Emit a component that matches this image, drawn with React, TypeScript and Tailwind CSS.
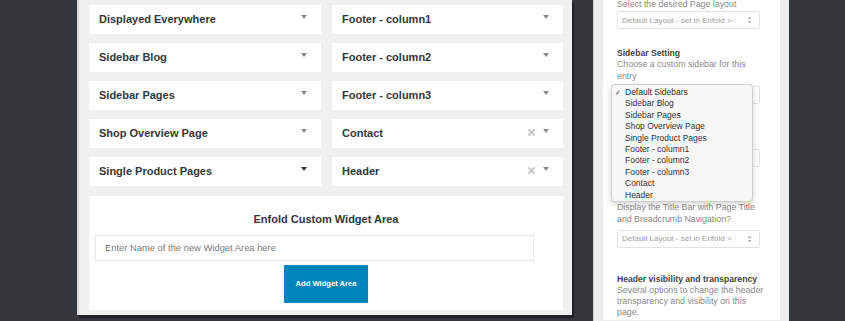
import React from 'react';

const font = { fontFamily: '"Liberation Sans", Arial, sans-serif' };

const Caret: React.FC<{ dark?: boolean }> = ({ dark }) => (
  <svg width="6" height="4" viewBox="0 0 6 4" className="-mt-[5px]">
    <path d="M0 0 L6 0 L3 4 Z" fill={dark ? '#333' : '#8a8a8a'} />
  </svg>
);

const Cross: React.FC = () => (
  <svg width="7" height="7" viewBox="0 0 7 7" className="-mt-[3px]">
    <path d="M1 1 L6 6 M6 1 L1 6" stroke="#c4c4c4" strokeWidth="1.8" strokeLinecap="round" />
  </svg>
);

const AreaCard: React.FC<{ name: string; removable?: boolean; dark?: boolean }> = ({ name, removable, dark }) => (
  <div className="h-[29px] bg-white flex items-center justify-between pl-[10px] pr-[14px]">
    <span className="text-[11px] font-bold text-[#32373c]">{name}</span>
    <div className="flex items-center gap-[8px]">
      {removable && <Cross />}
      <Caret dark={dark} />
    </div>
  </div>
);

const SelectBox: React.FC<{ label?: boolean }> = ({ label = true }) => (
  <div className="h-[18px] w-[143px] border border-[#e2e2e2] rounded-[2px] bg-white flex items-center justify-between pl-[4px] pr-[7px] overflow-hidden">
    <span className="text-[8px] text-[#a0a0a0] whitespace-nowrap overflow-hidden">
      {label && <>Default Layout - set in Enfold &gt; <span className="text-[#e0e0e0]">I</span></>}
    </span>
    <svg width="5" height="8" viewBox="0 0 5 8">
      <path d="M0.5 3 L2.5 0.8 L4.5 3 Z M0.5 5 L2.5 7.2 L4.5 5 Z" fill="#b0b0b0" />
    </svg>
  </div>
);

const sidebars = [
  'Default Sidebars',
  'Sidebar Blog',
  'Sidebar Pages',
  'Shop Overview Page',
  'Single Product Pages',
  'Footer - column1',
  'Footer - column2',
  'Footer - column3',
  'Contact',
  'Header',
];

export default function App() {
  const left = ['Displayed Everywhere', 'Sidebar Blog', 'Sidebar Pages', 'Shop Overview Page', 'Single Product Pages'];
  const right = ['Footer - column1', 'Footer - column2', 'Footer - column3', 'Contact', 'Header'];

  return (
    <div className="w-[845px] h-[321px] bg-[#34373c] overflow-hidden flex" style={font}>
      {/* widget areas panel */}
      <div className="ml-[77px] w-[495px] h-[315px] bg-[#f0f0f0] border-l-2 border-[#d9d9d9] shadow-[2px_3px_0_#222] pl-[10px] pr-[9px] pt-[5px] pb-[5px] flex flex-col gap-[10px]">
        <div className="grid grid-cols-[232px_231px] gap-x-[11px] gap-y-[9px]">
          {left.map((name, i) => (
            <React.Fragment key={name}>
              <AreaCard name={name} dark={i === 4} />
              <AreaCard name={right[i]} removable={i >= 3} />
            </React.Fragment>
          ))}
        </div>
        <div className="flex-1 bg-white px-[6px] pt-[16px] flex flex-col">
          <div className="text-center text-[11px] font-bold text-[#32373c] leading-[14px]">Enfold Custom Widget Area</div>
          <div className="mt-[9px] w-[439px] h-[26px] border border-[#e5e5e5] flex items-center pl-[9px]">
            <span className="text-[9.4px] text-[#7a7a7a]">Enter Name of the new Widget Area here</span>
          </div>
          <button className="mt-[4px] self-center w-[84px] h-[38px] bg-[#0085ba] text-white text-[7.6px] font-bold">
            Add Widget Area
          </button>
        </div>
      </div>

      {/* page settings sidebar */}
      <div className="ml-[21px] w-[196px] h-full bg-[#ededed] border-l border-[#d4d4d4] pl-[9px] pr-[9px]">
        <div className="relative h-full bg-white pl-[14px] text-[8.8px] leading-[11.2px] text-[#8a8a8a]">
          <div className="-mt-[1px]">Select the desired Page layout</div>
          <div className="mt-[1px]"><SelectBox /></div>

          <div className="mt-[19px] font-bold text-[8.6px] text-[#444]">Sidebar Setting</div>
          <div>Choose a custom sidebar for this<br />entry</div>
          <div className="mt-[4px]"><SelectBox label={false} /></div>

          {/* section hidden behind the open dropdown */}
          <div className="h-[45px]" />
          <SelectBox label={false} />

          <div className="h-[35.6px]" />
          <div>Display the Title Bar with Page Title<br />and Breadcrumb Navigation?</div>
          <div className="mt-[5px]"><SelectBox /></div>

          <div className="mt-[26px] font-bold text-[8.6px] text-[#444]">Header visibility and transparency</div>
          <div>Several options to change the header<br />transparency and visibility on this<br />page.</div>

          {/* open sidebar dropdown */}
          <div className="absolute left-[8px] top-[85px] w-[142px] h-[118px] bg-[#f7f7f7] border border-[#cfcfcf] rounded-[4px] shadow-[0_2px_6px_rgba(0,0,0,0.18)] pt-[2px] pl-[3px]">
            {sidebars.map((s, i) => (
              <div key={s} className="flex items-center h-[11.4px] text-[8.5px] text-[#333]">
                <span className="w-[10px] text-[7px] text-[#444]">{i === 0 ? '✓' : ''}</span>
                <span>{s}</span>
              </div>
            ))}
          </div>
        </div>
      </div>
    </div>
  );
}
